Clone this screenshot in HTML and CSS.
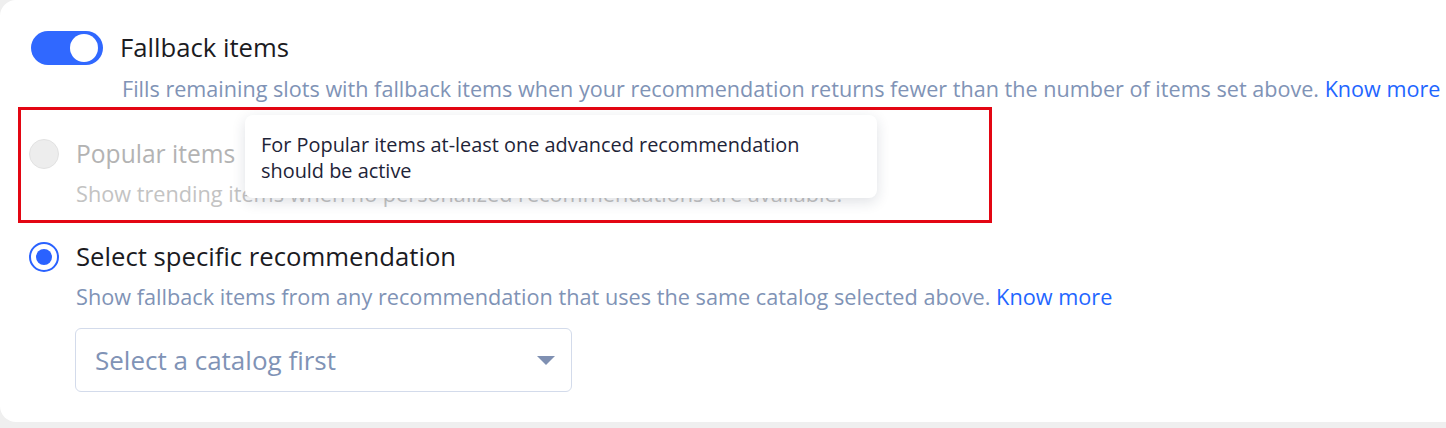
FILE: index.html
```html
<!DOCTYPE html>
<html lang="en">
<head>
<meta charset="utf-8">
<title>Fallback items</title>
<link rel="stylesheet" href="styles.css">
</head>
<body>
<div class="card">
  <div class="toggle-row">
    <span class="toggle"><span class="knob"></span></span>
    <span class="title">Fallback items</span>
  </div>
  <p class="desc desc-fallback">Fills remaining slots with fallback items when your recommendation returns fewer than the number of items set above. <a class="link" href="#">Know more</a></p>

  <div class="highlight">
    <div class="option-row">
      <span class="radio radio-disabled"></span>
      <span class="label label-disabled">Popular items</span>
    </div>
    <p class="desc desc-disabled">Show trending items when no personalized recommendations are available.</p>
    <div class="tooltip">For Popular items at-least one advanced recommendation<br>should be active</div>
  </div>

  <div class="option-row option-select">
    <span class="radio radio-checked"><span class="dot"></span></span>
    <span class="label">Select specific recommendation</span>
  </div>
  <p class="desc desc-select">Show fallback items from any recommendation that uses the same catalog selected above. <a class="link" href="#">Know more</a></p>
  <div class="dropdown">
    <span class="placeholder">Select a catalog first</span>
    <span class="caret"></span>
  </div>
</div>
</body>
</html>
```
FILE: styles.css
```css
html, body {
  margin: 0;
  padding: 0;
}
body {
  background: #efefef;
  font-family: "Open Sans", "Lato", sans-serif;
  width: 1446px;
  height: 428px;
  overflow: hidden;
}
.card {
  background: #ffffff;
  border-radius: 16px;
  width: 1500px;
  padding: 31px 0 30px 0;
  box-sizing: border-box;
}
.toggle-row {
  display: flex;
  align-items: center;
  gap: 17px;
  padding-left: 31px;
  height: 34px;
}
.toggle {
  width: 72px;
  height: 34px;
  border-radius: 17px;
  background: #3068ff;
  display: flex;
  align-items: center;
  justify-content: flex-end;
  padding-right: 5px;
  box-sizing: border-box;
}
.knob {
  width: 28px;
  height: 28px;
  border-radius: 50%;
  background: #ffffff;
}
.title, .label {
  font-size: 25.7px;
  color: #1b1b1f;
  line-height: 30px;
  white-space: nowrap;
}
.desc {
  margin: 0;
  font-size: 21.7px;
  line-height: 26px;
  color: #8093b6;
  white-space: nowrap;
}
.desc-fallback {
  margin: 11px 0 0 122px;
  font-size: 21.6px;
}
.link {
  color: #1f66ff;
  text-decoration: none;
}
.highlight {
  position: relative;
  margin: 5px 0 0 18px;
  width: 974px;
  box-sizing: border-box;
  border: 3px solid #e30613;
  padding: 29px 0 13px 8px;
}
.option-row {
  display: flex;
  align-items: center;
  gap: 17px;
  height: 30px;
}
.radio {
  width: 30px;
  height: 30px;
  border-radius: 50%;
  box-sizing: border-box;
  display: flex;
  align-items: center;
  justify-content: center;
  flex: none;
}
.radio-disabled {
  background: #ededed;
  border: 1px solid #e2e2e2;
}
.label-disabled {
  color: #b3b3b3;
  font-size: 24.6px;
}
.highlight .desc {
  margin: 12px 0 0 47px;
}
.desc-disabled {
  color: #c3c3c3;
}
.tooltip {
  position: absolute;
  left: 224px;
  top: 5px;
  width: 632px;
  height: 83px;
  box-sizing: border-box;
  padding: 17px 16px;
  background: #ffffff;
  border-radius: 8px;
  box-shadow: 0 4px 14px rgba(30, 40, 70, 0.14);
  font-size: 19.9px;
  line-height: 26px;
  color: #1e2438;
  white-space: nowrap;
}
.option-select {
  margin-top: 19px;
  padding-left: 29px;
}
.radio-checked {
  border: 2px solid #2a62ff;
  background: #ffffff;
}
.dot {
  width: 16px;
  height: 16px;
  border-radius: 50%;
  background: #2a62ff;
}
.desc-select {
  margin: 12px 0 0 76px;
}
.dropdown {
  margin: 18px 0 0 75px;
  width: 497px;
  height: 64px;
  box-sizing: border-box;
  border: 1px solid #d3dbeb;
  border-radius: 6px;
  display: flex;
  align-items: center;
  justify-content: space-between;
  padding: 0 16px 0 19px;
}
.placeholder {
  font-size: 26px;
  color: #8093b6;
}
.caret {
  width: 0;
  height: 0;
  border-left: 9px solid transparent;
  border-right: 9px solid transparent;
  border-top: 9px solid #7f90b2;
}
```
